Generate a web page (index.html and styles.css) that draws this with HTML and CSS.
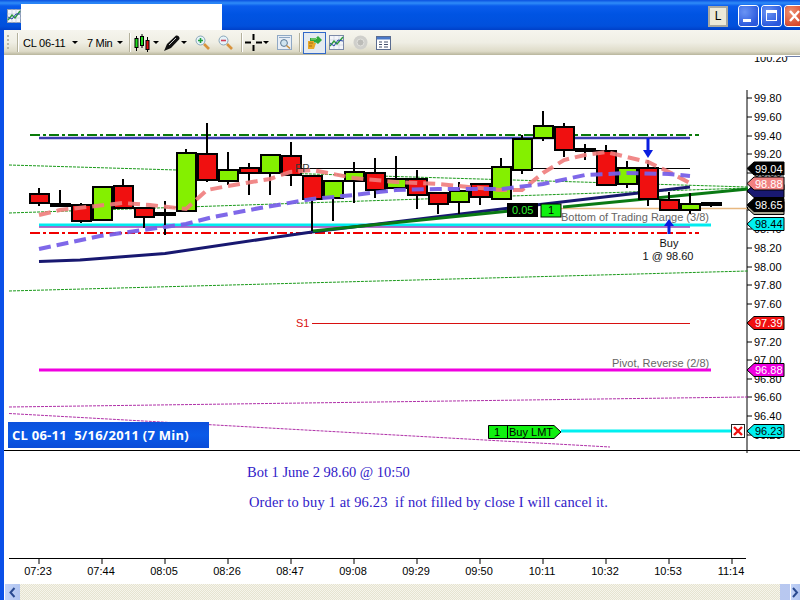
FILE: index.html
```html
<!DOCTYPE html>
<html lang="en">
<head>
<meta charset="utf-8">
<title>CL 06-11 chart</title>
<link rel="stylesheet" href="styles.css">
</head>
<body>
<div class="window">
  <header class="titlebar">
    <svg class="app-icon" viewBox="0 0 14 14" width="14" height="14">
      <rect x="0.5" y="0.5" width="13" height="13" fill="#f4f6fa" stroke="#8a9bb8"/>
      <path d="M0 5H14M0 9H14M5 0V14M9 0V14" stroke="#b9c4d8" stroke-width="0.6"/>
      <path d="M1 11L5 6L8 9L13 2" fill="none" stroke="#2c9a3c" stroke-width="1.4"/>
      <path d="M1 8L5 10L9 5L13 5" fill="none" stroke="#2a4aa8" stroke-width="1"/>
    </svg>
    <div class="title-blank"></div>
    <div class="title-spacer"></div>
    <div class="link-btn">L</div>
    <div class="win-btn win-blue">
      <svg viewBox="0 0 19 20" width="19" height="20"><rect x="4" y="13" width="8" height="3" fill="#fff"/></svg>
    </div>
    <div class="win-btn win-blue">
      <svg viewBox="0 0 19 20" width="19" height="20"><rect x="4.5" y="4.5" width="10" height="10" fill="none" stroke="#fff"/><rect x="4" y="4" width="11" height="3" fill="#fff"/></svg>
    </div>
    <div class="win-btn win-red">
      <svg viewBox="0 0 19 20" width="19" height="20"><path d="M5 5L14 15M14 5L5 15" stroke="#fff" stroke-width="2.4"/></svg>
    </div>
  </header>

  <nav class="toolbar">
    <div class="gripper"></div>
    <div class="sep sep-first"></div>
    <span class="tb-text tb-instrument">CL 06-11</span>
    <span class="caret caret-instrument"></span>
    <span class="tb-text tb-period">7 Min</span>
    <span class="caret caret-period"></span>
    <div class="sep sep-period"></div>
    <svg class="tb-icon icon-candles" viewBox="0 0 16 18" width="16" height="18">
      <path d="M2.5 2V17M8 0V14M13.5 3V18" stroke="#000"/>
      <rect x="1" y="4.5" width="3" height="9" fill="#1fdc1f" stroke="#000"/>
      <rect x="6.5" y="2.5" width="3" height="9" fill="#1fdc1f" stroke="#000"/>
      <rect x="12" y="6.5" width="3" height="9" fill="#e81010" stroke="#000"/>
    </svg>
    <span class="caret caret-candles"></span>
    <svg class="tb-icon icon-pen" viewBox="0 0 16 16" width="16" height="16">
      <path d="M0 16L3 9L12 0.5C14 0 16 2 15.5 4L7 13Z" fill="#111"/>
      <path d="M5 10L12 3" stroke="#c8c8c8" stroke-width="1"/>
    </svg>
    <span class="caret caret-pen"></span>
    <svg class="tb-icon icon-zoom-in" viewBox="0 0 15 15" width="15" height="15">
      <path d="M9 9L14 14" stroke="#d8923c" stroke-width="2.6"/>
      <circle cx="5.5" cy="5.5" r="4.5" fill="#e6f3fa" stroke="#8aa6b8"/>
      <path d="M3 5.5H8M5.5 3V8" stroke="#1fa03c" stroke-width="1.6"/>
    </svg>
    <svg class="tb-icon icon-zoom-out" viewBox="0 0 15 15" width="15" height="15">
      <path d="M9 9L14 14" stroke="#d8923c" stroke-width="2.6"/>
      <circle cx="5.5" cy="5.5" r="4.5" fill="#e6f3fa" stroke="#8aa6b8"/>
      <path d="M3 5.5H8" stroke="#d04058" stroke-width="1.6"/>
    </svg>
    <div class="sep sep-zoom"></div>
    <svg class="tb-icon icon-cross" viewBox="0 0 17 17" width="17" height="17">
      <path d="M0 8.5H6M11 8.5H17M8.5 0V6M8.5 11V17" stroke="#000" stroke-width="2"/>
    </svg>
    <span class="caret caret-cross"></span>
    <svg class="tb-icon icon-props" viewBox="0 0 15 15" width="15" height="15">
      <rect x="0.5" y="0.5" width="14" height="14" fill="#e8eef6" stroke="#8fa8c4"/>
      <path d="M2 2.5H13" stroke="#8fa8c4"/>
      <circle cx="7" cy="8" r="3.4" fill="#d0e4f0" stroke="#5a7894"/>
      <path d="M9.5 10.5L13 13.5" stroke="#c89040" stroke-width="1.6"/>
    </svg>
    <div class="sep sep-props"></div>
    <div class="tb-active">
      <svg viewBox="0 0 15 14" width="15" height="14">
        <path d="M3 2H9L11 0L15 4L11 8L9 6.5H3Z" fill="#2fa83e"/>
        <path d="M4 3H9L10 2" fill="none" stroke="#9ce08c"/>
        <path d="M1 5H7V7H9L7 13H1Z" fill="#e8a828"/>
        <path d="M2 7H6M2 10H5" stroke="#a86c10"/>
      </svg>
    </div>
    <svg class="tb-icon icon-chart" viewBox="0 0 15 15" width="15" height="15">
      <rect x="0.5" y="0.5" width="14" height="14" fill="#f4f6fa" stroke="#7c8aa8"/>
      <path d="M1 5H14M1 10H14M5 1V14M10 1V14" stroke="#c4cede" stroke-width="0.6"/>
      <path d="M1 11L5 6L8 9L14 2" fill="none" stroke="#2c9a3c" stroke-width="1.4"/>
      <path d="M1 8L5 11L9 5L14 6" fill="none" stroke="#2a4aa8"/>
    </svg>
    <svg class="tb-icon icon-disc" viewBox="0 0 15 15" width="15" height="15">
      <circle cx="7.5" cy="7.5" r="7" fill="#cfcfcb"/>
      <circle cx="7.5" cy="7.5" r="3.5" fill="#bcbcb8" stroke="#e2e2de"/>
    </svg>
    <svg class="tb-icon icon-table" viewBox="0 0 15 14" width="15" height="14">
      <rect x="0.5" y="0.5" width="14" height="13" fill="#fff" stroke="#5a6c90"/>
      <rect x="1" y="1" width="13" height="2.5" fill="#4a78c8"/>
      <path d="M3 6H6M3 8.5H6M3 11H6M8 6H12M8 8.5H12M8 11H12" stroke="#44506c"/>
    </svg>
  </nav>

  <main class="chart-wrap">
    <svg class="chart" viewBox="4 55 796 529" width="796" height="529">
      <!-- axis tick labels -->
      <g class="axis-text">
        <text x="754" y="62">100.20</text>
        <text x="754" y="102">99.80</text>
        <text x="754" y="121">99.60</text>
        <text x="754" y="140">99.40</text>
        <text x="754" y="158">99.20</text>
        <text x="754" y="177">99.00</text>
        <text x="754" y="196">98.80</text>
        <text x="754" y="214">98.60</text>
        <text x="754" y="233">98.40</text>
        <text x="754" y="252">98.20</text>
        <text x="754" y="271">98.00</text>
        <text x="754" y="289">97.80</text>
        <text x="754" y="308">97.60</text>
        <text x="754" y="327">97.40</text>
        <text x="754" y="346">97.20</text>
        <text x="754" y="364">97.00</text>
        <text x="754" y="383">96.80</text>
        <text x="754" y="401">96.60</text>
        <text x="754" y="420">96.40</text>
        <text x="754" y="439">96.20</text>
      </g>
      <rect class="mask" x="750" y="55" width="50" height="2"/>
      <path class="corner-line" d="M785 56.5H800"/>
      <path class="axis" d="M747 90V453"/>
      <path class="axis" d="M747 98h5M747 117h5M747 136h5M747 154h5M747 173h5M747 192h5M747 210h5M747 229h5M747 248h5M747 267h5M747 285h5M747 304h5M747 323h5M747 342h5M747 360h5M747 379h5M747 397h5M747 416h5M747 435h5"/>

      <!-- trend lines and levels -->
      <path class="trend-green" d="M9 165L748 187M9 213L748 188M9 291L748 271"/>
      <path class="trend-magenta" d="M9 407L748 397M9 413.5L610 447"/>
      <path class="level-dash level-green" d="M30 135H699"/>
      <path class="level-dash level-red" d="M30 233H699"/>
      <path class="level level-blue" d="M39 138H690"/>
      <path class="level level-cyan" d="M39 225H711"/>
      <path class="level level-purple" d="M39 227H690"/>
      <path class="level-thin" d="M296 168.5H690"/>
      <path class="level-tan" d="M560 208.5H748"/>
      <path class="level-s1" d="M312 323.5H690"/>
      <path class="level-pivot" d="M39 370H711"/>
      <path class="level-order" d="M561 431H732"/>
      <path class="ma-navy" d="M39 261.5L80 260L165 253.5L270 238L312 232L510 208L690 187"/>
      <path class="ma-green" d="M313 231L510 211M563 207L748 189"/>

      <!-- candles -->
      <g class="wicks">
        <path d="M39 188V206M60 190V207M81 203V223M102 186V220M123 179V208M144 208V228M165 201V235M186 149V211M207 123V182M228 152V185M249 163V195M270 163V195M291 142V186M312 175V231M333 180V221M354 162V203M375 158V198M396 156V190M417 170V209M438 192V214M459 182V214M480 184V205M501 158V200M522 135V174M543 111V141M564 123V157M585 144V160M606 145V185M627 161V188M648 160V206M669 192V210M690 193V214M711 202V207"/>
      </g>
      <g class="bodies">
        <rect class="dn" x="30" y="194" width="19" height="9"/>
        <rect class="dj" x="51" y="204" width="19" height="2"/>
        <rect class="dn" x="72" y="205" width="19" height="16"/>
        <rect class="up" x="93" y="187" width="19" height="33"/>
        <rect class="dn" x="114" y="186" width="19" height="22"/>
        <rect class="dn" x="135" y="208" width="19" height="9"/>
        <rect class="dj" x="156" y="213" width="19" height="2"/>
        <rect class="up" x="177" y="153" width="19" height="58"/>
        <rect class="dn" x="198" y="154" width="19" height="26"/>
        <rect class="up" x="219" y="170" width="19" height="11"/>
        <rect class="dn" x="240" y="168" width="19" height="5"/>
        <rect class="up" x="261" y="155" width="19" height="18"/>
        <rect class="dn" x="282" y="156" width="19" height="19"/>
        <rect class="dn" x="303" y="176" width="19" height="23"/>
        <rect class="up" x="324" y="181" width="19" height="17"/>
        <rect class="up" x="345" y="172" width="19" height="9"/>
        <rect class="dn" x="366" y="173" width="19" height="17"/>
        <rect class="up" x="387" y="179" width="19" height="9"/>
        <rect class="dn" x="408" y="179" width="19" height="16"/>
        <rect class="dn" x="429" y="193" width="19" height="11"/>
        <rect class="up" x="450" y="191" width="19" height="11"/>
        <rect class="dn" x="471" y="184" width="19" height="13"/>
        <rect class="up" x="492" y="167" width="19" height="32"/>
        <rect class="up" x="513" y="139" width="19" height="31"/>
        <rect class="up" x="534" y="126" width="19" height="12"/>
        <rect class="dn" x="555" y="127" width="19" height="23"/>
        <rect class="dj" x="576" y="149" width="19" height="2"/>
        <rect class="dn" x="597" y="151" width="19" height="34"/>
        <rect class="up" x="618" y="168" width="19" height="16"/>
        <rect class="dn" x="639" y="168" width="19" height="31"/>
        <rect class="dn" x="660" y="200" width="19" height="10"/>
        <rect class="up" x="681" y="204" width="19" height="6"/>
        <rect class="dj" x="702" y="203" width="19" height="2"/>
      </g>

      <!-- moving averages over the candles -->
      <path class="ma-pink" d="M39 215L60 210L123 203L150 205L186 209L207 190L228 186L270 179L290 172L312 170L354 178L396 182L438 184L480 188L501 190L522 190L543 173L564 160L585 155L606 152L627 157L648 162L669 172L690 183"/>
      <path class="ma-violet" d="M39 249L100 236L186 224L213 217L260 208L312 199L354 195L396 190L438 189L501 189L543 184L585 175L627 173L669 174L690 176"/>

      <!-- labels on the chart -->
      <text class="pp-text" x="295" y="172">PP</text>
      <text class="s1-text" x="296" y="327">S1</text>
      <text class="note-text" x="561" y="221">Bottom of Trading Range (3/8)</text>
      <text class="note-text" x="612" y="367">Pivot, Reverse (2/8)</text>
      <text class="buy-text" x="669" y="247">Buy</text>
      <text class="buy-text" x="668" y="260">1 @ 98.60</text>

      <path class="arrow" d="M646.5 138H649.5V150H653L648 158L643 150H646.5Z"/>
      <path class="arrow" d="M667.5 234H670.5V226H674L669 219L664 226H667.5Z"/>

      <rect class="box-black" x="507" y="203" width="31" height="14"/>
      <text class="box-black-text" x="512" y="214">0.05</text>
      <rect class="box-green" x="541" y="204" width="20" height="13"/>
      <text class="box-green-text" x="548" y="214">1</text>

      <!-- price tags on the axis -->
      <g class="tag tag-navy" transform="translate(0,191)"><polygon points="747,0 754,-6.5 784,-6.5 784,6.5 754,6.5"/></g>
      <g class="tag tag-gray" transform="translate(0,208)"><polygon points="747,0 754,-6.5 784,-6.5 784,6.5 754,6.5"/></g>
      <g class="tag tag-black" transform="translate(0,168.5)"><polygon points="747,0 754,-6.5 784,-6.5 784,6.5 754,6.5"/><text x="755" y="4">99.04</text></g>
      <g class="tag tag-pink" transform="translate(0,183.5)"><polygon points="747,0 754,-6.5 784,-6.5 784,6.5 754,6.5"/><text x="755" y="4">98.88</text></g>
      <g class="tag tag-black" transform="translate(0,205)"><polygon points="747,0 754,-6.5 784,-6.5 784,6.5 754,6.5"/><text x="755" y="4">98.65</text></g>
      <g class="tag tag-cyan" transform="translate(0,224)"><polygon points="747,0 754,-6.5 784,-6.5 784,6.5 754,6.5"/><text x="755" y="4">98.44</text></g>
      <g class="tag tag-red" transform="translate(0,323)"><polygon points="747,0 754,-6.5 784,-6.5 784,6.5 754,6.5"/><text x="755" y="4">97.39</text></g>
      <g class="tag tag-magenta" transform="translate(0,370)"><polygon points="747,0 754,-6.5 784,-6.5 784,6.5 754,6.5"/><text x="755" y="4">96.88</text></g>
      <g class="tag tag-cyan" transform="translate(0,431)"><polygon points="747,0 754,-6.5 784,-6.5 784,6.5 754,6.5"/><text x="755" y="4">96.23</text></g>

      <!-- working order -->
      <polygon class="order-tag" points="488.5,425.5 554,425.5 561,432 554,438.5 488.5,438.5"/>
      <path class="order-div" d="M507.5 426V438"/>
      <text class="order-text" x="494" y="436">1</text>
      <text class="order-text" x="509" y="436">Buy LMT</text>
      <rect class="cancel-box" x="731.5" y="424.5" width="13" height="13"/>
      <path class="cancel-x" d="M734 427L742 435M742 427L734 435"/>

      <!-- instrument banner -->
      <defs>
        <linearGradient id="banner-fill" x1="0" y1="0" x2="0" y2="1">
          <stop offset="0" stop-color="#0c50dc"/>
          <stop offset="0.5" stop-color="#0a5ae8"/>
          <stop offset="1" stop-color="#0a4cd8"/>
        </linearGradient>
      </defs>
      <rect class="banner" x="8" y="422" width="201" height="26"/>
      <text class="banner-text" x="12" y="440">CL 06-11  5/16/2011 (7 Min)</text>
      <path class="divider" d="M4 450.5H800"/>

      <!-- annotations -->
      <text class="memo" x="247" y="477">Bot 1 June 2 98.60 @ 10:50</text>
      <text class="memo memo-wide" x="249" y="507">Order to buy 1 at 96.23  if not filled by close I will cancel it.</text>

      <!-- time axis -->
      <path class="axis" d="M9 558.5H746"/>
      <path class="axis" d="M39 558V564M102 558V564M165 558V564M228 558V564M291 558V564M354 558V564M417 558V564M480 558V564M543 558V564M606 558V564M669 558V564M732 558V564"/>
      <g class="time-text">
        <text x="38" y="575">07:23</text>
        <text x="101" y="575">07:44</text>
        <text x="164" y="575">08:05</text>
        <text x="227" y="575">08:26</text>
        <text x="290" y="575">08:47</text>
        <text x="353" y="575">09:08</text>
        <text x="416" y="575">09:29</text>
        <text x="479" y="575">09:50</text>
        <text x="542" y="575">10:11</text>
        <text x="605" y="575">10:32</text>
        <text x="668" y="575">10:53</text>
        <text x="731" y="575">11:14</text>
      </g>
    </svg>
  </main>

  <footer class="scrollbar">
    <div class="sb-btn sb-left">
      <svg viewBox="0 0 15 16" width="15" height="16"><path d="M9.5 4L5.5 8.5L9.5 13" fill="none" stroke="#2a4a90" stroke-width="2"/></svg>
    </div>
    <div class="sb-track"></div>
    <div class="sb-thumb"></div>
    <div class="sb-btn sb-right">
      <svg viewBox="0 0 9 16" width="9" height="16"><path d="M2 4L6 8.5L2 13" fill="none" stroke="#2a4a90" stroke-width="2"/></svg>
    </div>
  </footer>
</div>
</body>
</html>
```
FILE: styles.css
```css
html, body {
  margin: 0;
  padding: 0;
  overflow: hidden;
}
.window {
  width: 800px;
  height: 600px;
  display: flex;
  flex-direction: column;
  background: #fff;
  font-family: "Liberation Sans", Arial, sans-serif;
}

/* title bar */
.titlebar {
  height: 30px;
  flex: none;
  display: flex;
  align-items: flex-start;
  background: linear-gradient(#0a50e0 0, #2f8cf8 3px, #0a5cec 6px, #0054e3 14px, #0150dc 26px, #0040c8 30px);
}
.app-icon {
  margin: 9px 0 0 7px;
  flex: none;
}
.title-blank {
  width: 201px;
  height: 26px;
  margin-top: 4px;
  background: #fff;
}
.title-spacer { flex: 1; }
.link-btn {
  width: 16px;
  height: 17px;
  margin: 6px 9px 0 0;
  border: 2px solid #a8a8a0;
  background: #ece9d8;
  font-size: 12px;
  line-height: 17px;
  text-align: center;
  color: #000;
}
.win-btn {
  width: 19px;
  height: 20px;
  margin: 6px 2px 0 2px;
  border-radius: 3px;
  box-shadow: 0 0 0 1px #fff;
  flex: none;
}
.win-btn svg { display: block; }
.win-blue { background: radial-gradient(circle at 30% 30%, #6a94f4, #2a58dc 75%); }
.win-red { background: radial-gradient(circle at 30% 30%, #ee9070, #d8482c 75%); margin-right: -4px; }

/* toolbar */
.toolbar {
  height: 25px;
  flex: none;
  display: flex;
  align-items: center;
  border-left: 4px solid #0a50e8;
  background: linear-gradient(#f6f5ee 0, #efeee4 50%, #dedbc8 85%, #b8b59c 100%);
  box-sizing: border-box;
}
.gripper {
  width: 2px;
  height: 16px;
  margin-left: 3px;
  background: repeating-linear-gradient(#b8b5a4 0 2px, transparent 2px 4px);
}
.sep {
  width: 1px;
  height: 19px;
  flex: none;
  background: #b4b19c;
  box-shadow: 1px 0 0 #fff;
}
.sep-first { margin-left: 8px; }
.tb-text {
  font-size: 11px;
  color: #000;
  flex: none;
}
.tb-instrument { margin-left: 5px; width: 46px; letter-spacing: -0.2px; }
.tb-period { margin-left: 9px; width: 27px; letter-spacing: -0.3px; }
.caret {
  width: 0;
  height: 0;
  flex: none;
  border-left: 3px solid transparent;
  border-right: 3px solid transparent;
  border-top: 3px solid #000;
}
.caret-instrument { margin-left: 3px; }
.caret-period { margin-left: 3px; }
.sep-period { margin-left: 6px; }
.tb-icon { flex: none; display: block; }
.icon-candles { margin-left: 4px; }
.caret-candles { margin-left: 3px; }
.icon-pen { margin-left: 5px; }
.caret-pen { margin-left: 1px; }
.icon-zoom-in { margin-left: 8px; }
.icon-zoom-out { margin-left: 8px; }
.sep-zoom { margin-left: 8px; }
.icon-cross { margin-left: 3px; }
.caret-cross { margin-left: 1px; }
.icon-props { margin-left: 8px; }
.sep-props { margin-left: 7px; }
.tb-active {
  width: 21px;
  height: 20px;
  margin-left: 3px;
  border: 1px solid #3168c8;
  background: #e4eaf0;
  display: flex;
  align-items: center;
  justify-content: center;
  flex: none;
}
.icon-chart { margin-left: 3px; }
.icon-disc { margin-left: 9px; }
.icon-table { margin-left: 8px; }

/* chart */
.chart-wrap {
  flex: 1;
  min-height: 0;
  border-left: 4px solid #0a50e8;
  background: #fff;
}
.chart { display: block; }
.axis-text text, .time-text text, .tag text {
  font: 11px "Liberation Sans", Arial, sans-serif;
}
.axis-text text, .time-text text { fill: #000; }
.time-text text { text-anchor: middle; }
.mask { fill: #fff; }
.corner-line { stroke: #6f80a8; stroke-width: 1; }
.axis { stroke: #000; stroke-width: 1; fill: none; }
.trend-green { stroke: #1a9a1a; stroke-width: 1; stroke-dasharray: 3 1; fill: none; }
.trend-magenta { stroke: #b030a8; stroke-width: 1; stroke-dasharray: 3 1; fill: none; }
.level-dash { stroke-width: 2; stroke-dasharray: 10 3 3 3; fill: none; }
.level-green { stroke: #0a7a0a; }
.level-red { stroke: #f00000; }
.level { fill: none; }
.level-blue { stroke: #3c3cb0; stroke-width: 2.5; }
.level-cyan { stroke: #00ecf0; stroke-width: 3; }
.level-purple { stroke: #a040b8; stroke-width: 1.5; }
.level-thin { stroke: #000; stroke-width: 1; }
.level-tan { stroke: #e8b880; stroke-width: 1.5; }
.level-s1 { stroke: #d81010; stroke-width: 1; }
.level-pivot { stroke: #f000e0; stroke-width: 3; }
.level-order { stroke: #00f0f0; stroke-width: 3; }
.ma-navy { stroke: #181870; stroke-width: 3; fill: none; }
.ma-green { stroke: #0a7a14; stroke-width: 3; fill: none; }
.wicks path { stroke: #000; stroke-width: 2; fill: none; }
.bodies rect { stroke: #000; stroke-width: 2; }
.up { fill: #84f000; }
.dn { fill: #f01010; }
.dj { fill: #000; }
.ma-pink { stroke: #f07c7c; stroke-width: 4; stroke-dasharray: 12 6; fill: none; opacity: 0.9; }
.ma-violet { stroke: #7860e8; stroke-width: 4; stroke-dasharray: 12 6; fill: none; opacity: 0.95; }
.pp-text { font: 11px "Liberation Sans", Arial, sans-serif; fill: #333; }
.s1-text { font: 11px "Liberation Sans", Arial, sans-serif; fill: #d81010; }
.note-text { font: 11px "Liberation Sans", Arial, sans-serif; fill: #666; }
.buy-text { font: 11px "Liberation Sans", Arial, sans-serif; fill: #111; text-anchor: middle; }
.arrow { fill: #0a1ee0; }
.box-black { fill: #000; }
.box-black-text { font: 11px "Liberation Sans", Arial, sans-serif; fill: #30f030; }
.box-green { fill: #10f010; stroke: #000; }
.box-green-text { font: 11px "Liberation Sans", Arial, sans-serif; fill: #000; }
.tag polygon { stroke: #000; stroke-width: 1; }
.tag-black polygon { fill: #000; }
.tag-black text { fill: #fff; }
.tag-pink polygon { fill: #f08080; }
.tag-pink text { fill: #fff; }
.tag-navy polygon { fill: #181870; }
.tag-gray polygon { fill: #a8a490; }
.tag-cyan polygon { fill: #00f0f0; }
.tag-cyan text { fill: #000; }
.tag-red polygon { fill: #f01010; }
.tag-red text { fill: #fff; }
.tag-magenta polygon { fill: #f000e0; }
.tag-magenta text { fill: #fff; }
.order-tag { fill: #10f010; stroke: #000; }
.order-div { stroke: #000; }
.order-text { font: 11px "Liberation Sans", Arial, sans-serif; fill: #000; }
.cancel-box { fill: #fff; stroke: #222; }
.cancel-x { stroke: #f01010; stroke-width: 2.4; fill: none; }
.banner { fill: url(#banner-fill); }
.banner-text {
  font: bold 13px "Open Sans", sans-serif;
  letter-spacing: 0.25px;
  fill: #fff;
  white-space: pre;
}
.divider { stroke: #000; stroke-width: 1; }
.memo {
  font: 14.5px "Liberation Serif", "Times New Roman", serif;
  fill: #3020c8;
  white-space: pre;
}
.memo-wide { letter-spacing: 0.14px; }

/* scrollbar */
.scrollbar {
  height: 16px;
  flex: none;
  display: flex;
  border-left: 4px solid #0a50e8;
  background: #fff;
}
.sb-btn {
  flex: none;
  background: linear-gradient(90deg, #c4d4f8, #b0c4f0);
}
.sb-btn svg { display: block; }
.sb-left { width: 15px; margin-left: 1px; }
.sb-right { width: 9px; }
.sb-track {
  flex: 1;
  background: repeating-conic-gradient(#e6e3d0 0 25%, #f6f5ec 0 50%) 0 0 / 2px 2px;
}
.sb-thumb {
  width: 10px;
  margin-right: 1px;
  background: #b8c8f0;
}
```
